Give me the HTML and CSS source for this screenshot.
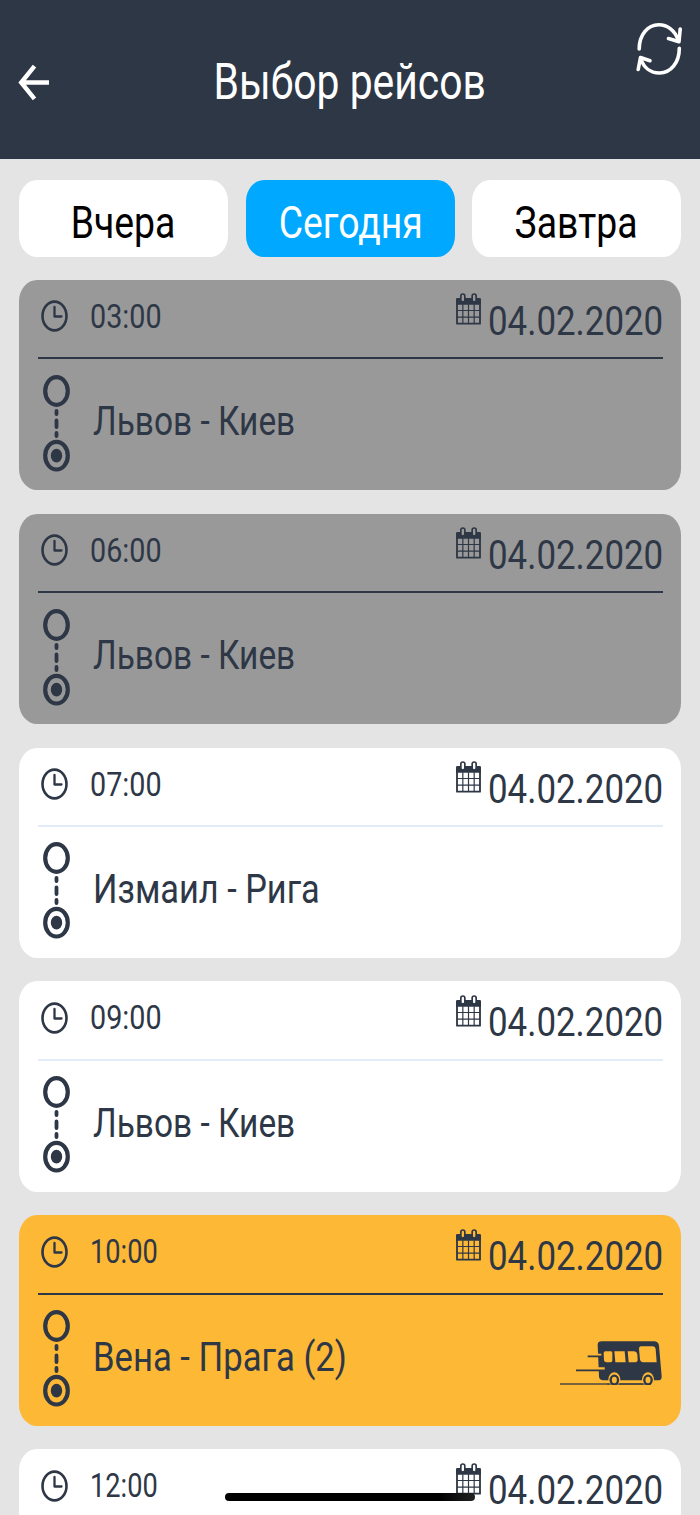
FILE: index.html
```html
<!DOCTYPE html>
<html lang="ru">
<head>
<meta charset="utf-8">
<title>Выбор рейсов</title>
<link rel="stylesheet" href="styles.css">
</head>
<body>
<svg class="defs" aria-hidden="true">
  <symbol id="clock" viewBox="0 0 27 32">
    <ellipse cx="13.5" cy="16" rx="12" ry="14.4" fill="none" stroke="currentColor" stroke-width="2.600"/>
    <path d="M13.500 7v9.500h7" fill="none" stroke="currentColor" stroke-width="2.300" stroke-linecap="round" stroke-linejoin="round"/>
  </symbol>
  <symbol id="calendar" viewBox="0 0 75 96">
    <path d="M3 25v67h69v-67" fill="none" stroke="currentColor" stroke-width="5.500" stroke-linejoin="round"/>
    <path d="M0 35V19q0-4 4-4h67q4 0 4 4v16z" fill="currentColor"/>
    <path d="M14.500 9q0-6 6-6t6 6v13q0 5-6 5t-6-5zM48.500 9q0-6 6-6t6 6v13q0 5-6 5t-6-5z" fill="var(--card)" stroke="currentColor" stroke-width="5"/>
    <path d="M20.500 34v57M37.500 34v57M54.500 34v57M3 52.500h69M3 72.500h69" fill="none" stroke="currentColor" stroke-width="3.600"/>
  </symbol>
  <symbol id="stops" viewBox="0 0 27 97">
    <g fill="none" stroke="currentColor">
      <ellipse cx="13.500" cy="16" rx="11.300" ry="13.800" stroke-width="4.200"/>
      <ellipse cx="13.500" cy="80.700" rx="11.300" ry="13.800" stroke-width="4.200"/>
      <path d="M13.500 35.800v3.200M13.500 45.500v6.500M13.500 58v3" stroke-width="3.800" stroke-linecap="round"/>
    </g>
    <ellipse cx="13.500" cy="80.700" rx="5.700" ry="6.900" fill="currentColor"/>
  </symbol>
</svg>

<header class="header">
  <svg class="back" viewBox="0 0 31 37"><path d="M16.500 2.200L3.200 18.500l13.300 16.300M3.500 18.500H31" fill="none" stroke="#fff" stroke-width="4.400"/></svg>
  <h1 class="title"><span class="fit">Выбор рейсов</span></h1>
  <svg class="refresh" viewBox="0 0 46 54">
    <g fill="none" stroke="#fff" stroke-width="3.600" stroke-linecap="round" stroke-linejoin="round">
      <path d="M3.200 27C3.200 13 11.500 2.800 22.800 2.800c8.700 0 16.200 5.700 19.200 15"/>
      <path d="M32.500 16.500l10.500 3.200 1.200-12.700"/>
      <path d="M43.300 26.200C43.300 40.500 35 51 23.500 51 14.500 51 7.500 45.500 4.800 36.500"/>
      <path d="M2.200 47.500L4.500 35.500l9.500 3.200"/>
    </g>
  </svg>
</header>

<nav class="tabs">
  <div class="tab yesterday"><span class="fit">Вчера</span></div>
  <div class="tab today"><span class="fit">Сегодня</span></div>
  <div class="tab tomorrow"><span class="fit">Завтра</span></div>
</nav>

<main class="list">
  <article class="card past">
    <div class="top"><svg class="clock"><use href="#clock"/></svg><span class="time">03:00</span><svg class="calendar"><use href="#calendar"/></svg><span class="date">04.02.2020</span></div>
    <div class="body"><svg class="stops"><use href="#stops"/></svg><span class="route kiev">Львов - Киев</span></div>
  </article>
  <article class="card past">
    <div class="top"><svg class="clock"><use href="#clock"/></svg><span class="time">06:00</span><svg class="calendar"><use href="#calendar"/></svg><span class="date">04.02.2020</span></div>
    <div class="body"><svg class="stops"><use href="#stops"/></svg><span class="route kiev">Львов - Киев</span></div>
  </article>
  <article class="card">
    <div class="top"><svg class="clock"><use href="#clock"/></svg><span class="time">07:00</span><svg class="calendar"><use href="#calendar"/></svg><span class="date">04.02.2020</span></div>
    <div class="body"><svg class="stops"><use href="#stops"/></svg><span class="route riga">Измаил - Рига</span></div>
  </article>
  <article class="card">
    <div class="top"><svg class="clock"><use href="#clock"/></svg><span class="time">09:00</span><svg class="calendar"><use href="#calendar"/></svg><span class="date">04.02.2020</span></div>
    <div class="body"><svg class="stops"><use href="#stops"/></svg><span class="route kiev">Львов - Киев</span></div>
  </article>
  <article class="card active">
    <div class="top"><svg class="clock"><use href="#clock"/></svg><span class="time narrow">10:00</span><svg class="calendar"><use href="#calendar"/></svg><span class="date">04.02.2020</span></div>
    <div class="body"><svg class="stops"><use href="#stops"/></svg><span class="route">Вена - Прага (2)</span>
      <svg class="bus" viewBox="58 62 306 134">
        <path d="M58 191H331" stroke="#4d4a41" stroke-width="4"/>
        <path d="M182 63H342Q353 64 355 76L363 168Q363 180 355 180H186Q175 179 175 168L171 73Q172 63 182 63Z" fill="#2e3746"/>
        <g fill="#fdb836">
          <path d="M194 93H211Q215 94 215 98V121Q214 126 209 126H197Q190 125 190 120L189 98Q189 94 194 93ZM221 93H252L255 126H224ZM261 93H281Q289 94 290 102L291 119Q291 125 285 126H264ZM300 78H337Q344 79 345 86L348 126H307Q299 125 298 118L295 85Q295 79 300 78Z"/>
          <path d="M168 100H182V109H168ZM168 141H192V150H168Z"/>
          <ellipse cx="221" cy="178" rx="18" ry="22"/><ellipse cx="322" cy="178" rx="18" ry="22"/>
        </g>
        <path d="M141 108H184M106 150H192" stroke="#2e3746" stroke-width="5"/>
        <path d="M200 191H331" stroke="#2e3746" stroke-width="3"/>
        <g fill="#fdb836" stroke="#2e3746" stroke-width="7"><ellipse cx="221" cy="179" rx="11" ry="13"/><ellipse cx="322" cy="179" rx="11" ry="13"/></g>
      </svg>
    </div>
  </article>
  <article class="card cut">
    <div class="top"><svg class="clock"><use href="#clock"/></svg><span class="time narrow">12:00</span><svg class="calendar"><use href="#calendar"/></svg><span class="date">04.02.2020</span></div>
  </article>
</main>
<div class="home-indicator"></div>
</body>
</html>
```

FILE: styles.css
```css
* { box-sizing: border-box; }
html, body { margin: 0; height: 1515px; overflow: hidden; }
body {
  background: #e4e4e4;
  color: #2e3746;
  font-family: Roboto, "Liberation Sans", sans-serif;
}
svg { display: block; flex: none; }
.defs { position: absolute; width: 0; height: 0; }
.fit { display: inline-block; }

.header {
  display: grid;
  grid-template-columns: 100px 1fr 100px;
  height: 159px;
  background: #2e3746;
}
.back { width: 31px; height: 37px; margin: 64px 0 0 18px; }
.title {
  margin: 0;
  font-size: 50px;
  font-weight: 400;
  line-height: 165px;
  text-align: center;
  white-space: nowrap;
  color: #fff;
}
.title .fit { transform: scaleX(.817); }
.refresh { width: 46px; height: 54px; margin: 22px 0 0 35.500px; }

.tabs {
  display: grid;
  grid-template-columns: 208.500px 208.500px 208.500px;
  gap: 18px;
  padding: 20.600px 19px 0;
}
.today, .tomorrow { position: relative; }
.today { left: .5px; }
.tab {
  height: 77.100px;
  border-radius: 18px / 21px;
  background: #fff;
  color: #000;
  font-size: 45px;
  line-height: 85px;
  text-align: center;
}
.today { background: #00a9ff; color: #fff; }
.tab .fit { transform: scaleX(.83); }

.list {
  display: flex;
  flex-direction: column;
  gap: 23.500px;
  padding: 23.100px 19px 0;
}
.card {
  --card: #fff;
  flex: none;
  height: 210.400px;
  padding: 0 18.500px;
  border-radius: 18px / 21px;
  background: var(--card);
}
.top {
  display: flex;
  height: 79.200px;
  border-bottom: 2.400px solid #e3edfa;
}
.past { --card: #999; }
.active { --card: #fdb836; }
.past .top, .active .top { border-color: #2e3746; }
/* last card continues below the fold */
.cut { height: 66px; overflow: hidden; border-radius: 18px 18px 0 0 / 21px 21px 0 0; }
.cut .top { height: 66px; border: 0; }
.clock { width: 27px; height: 32px; margin: 20.300px 0 0 3.500px; }
.time, .date, .route { white-space: nowrap; transform-origin: 0 50%; }
.time {
  width: 100px;
  margin-left: 22px;
  font-size: 34px;
  line-height: 73px;
  transform: scaleX(.845);
}
.narrow { transform: scaleX(.8); }
.calendar { width: 25px; height: 32px; margin: 13.500px 0 0 auto; }
.date {
  width: 174.500px;
  margin-left: 7.500px;
  font-size: 40px;
  line-height: 83px;
  transform: scaleX(.872);
}
.body { display: flex; }
.stops { width: 27px; height: 97px; margin: 15.700px 0 0 5px; }
.route {
  margin: 43px 0 0 23.500px;
  font-size: 40px;
  line-height: 40px;
  transform: scaleX(.866);
}
.kiev { transform: scaleX(.836); }
.riga { transform: scaleX(.858); }
.bus { width: 102px; height: 44.700px; margin: 46px .8px 0 auto; }

.home-indicator {
  position: fixed;
  left: 225px;
  top: 1492.700px;
  width: 250px;
  height: 8.500px;
  border-radius: 5px;
  background: linear-gradient(90deg, #000 86%, #222);
}
```
